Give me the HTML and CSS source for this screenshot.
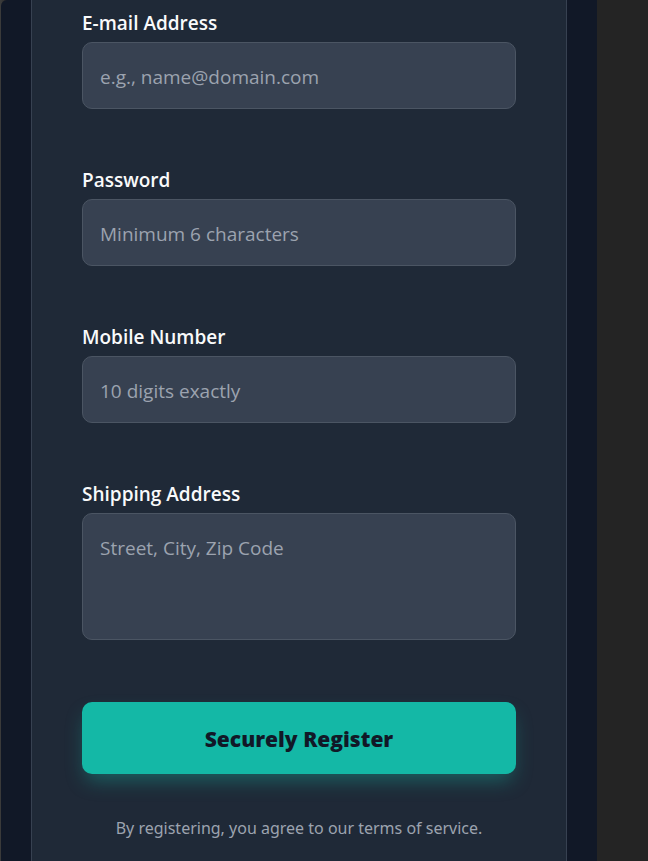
FILE: index.html
```html
<!DOCTYPE html>
<html lang="en">
<head>
<meta charset="utf-8">
<meta name="viewport" content="width=device-width, initial-scale=1">
<title>Register</title>
<link rel="stylesheet" href="styles.css">
</head>
<body>
<main class="page">
  <form class="card">
    <div class="field">
      <label for="email">E-mail Address</label>
      <input id="email" type="email" placeholder="e.g., name@domain.com">
    </div>
    <div class="field">
      <label for="password">Password</label>
      <input id="password" type="password" placeholder="Minimum 6 characters">
    </div>
    <div class="field">
      <label for="mobile">Mobile Number</label>
      <input id="mobile" type="tel" placeholder="10 digits exactly">
    </div>
    <div class="field">
      <label for="address">Shipping Address</label>
      <textarea id="address" placeholder="Street, City, Zip Code"></textarea>
    </div>
    <button class="submit" type="submit">Securely Register</button>
    <p class="terms">By registering, you agree to our terms of service.</p>
  </form>
</main>
</body>
</html>
```

FILE: styles.css
```css
* {
  box-sizing: border-box;
}

body {
  margin: 0;
  padding: 0 51px 0 1px;
  background: linear-gradient(to right, #3a3a3a 1px, #242424 8px);
  font-family: "Segoe UI", "Open Sans", "Noto Sans", sans-serif;
}

.page {
  min-height: 100vh;
  display: flex;
  padding: 0 30px;
  border-top-left-radius: 6px;
  background: #111827;
}

.card {
  flex: 1;
  min-width: 0;
  padding: 9px 50px 20px;
  border: solid #374151;
  border-width: 0 1px;
  background: #1f2937;
}

.field {
  display: flex;
  flex-direction: column;
  gap: 5px;
  margin-bottom: 57px;
}

label {
  color: #f9fafb;
  font-size: 19px;
  font-weight: 600;
  line-height: 28px;
}

input,
textarea {
  width: 100%;
  height: 67px;
  margin: 0;
  padding: 17px 17px 15px;
  border: 1px solid #4b5563;
  border-radius: 10px;
  background: #374151;
  color: #f9fafb;
  font-family: inherit;
  font-size: 19px;
  line-height: 34px;
}

textarea {
  display: block;
  height: 127px;
  resize: none;
}

input::placeholder,
textarea::placeholder {
  color: #9ca3af;
  opacity: 1;
}

.submit {
  display: block;
  width: 100%;
  height: 72px;
  margin-top: 62px;
  padding: 2px 0 0;
  border: 0;
  border-radius: 10px;
  background: #14b8a6;
  box-shadow: 0 10px 20px -4px rgba(20, 184, 166, 0.4);
  color: #111827;
  font-family: inherit;
  font-size: 21px;
  font-weight: 800;
}

.field:has(+ .submit) {
  margin-bottom: 0;
}

.terms {
  margin: 42px 0 0;
  color: #9ca3af;
  font-family: "Segoe UI", "Noto Sans", sans-serif;
  font-size: 16px;
  line-height: 24px;
  text-align: center;
}
```
